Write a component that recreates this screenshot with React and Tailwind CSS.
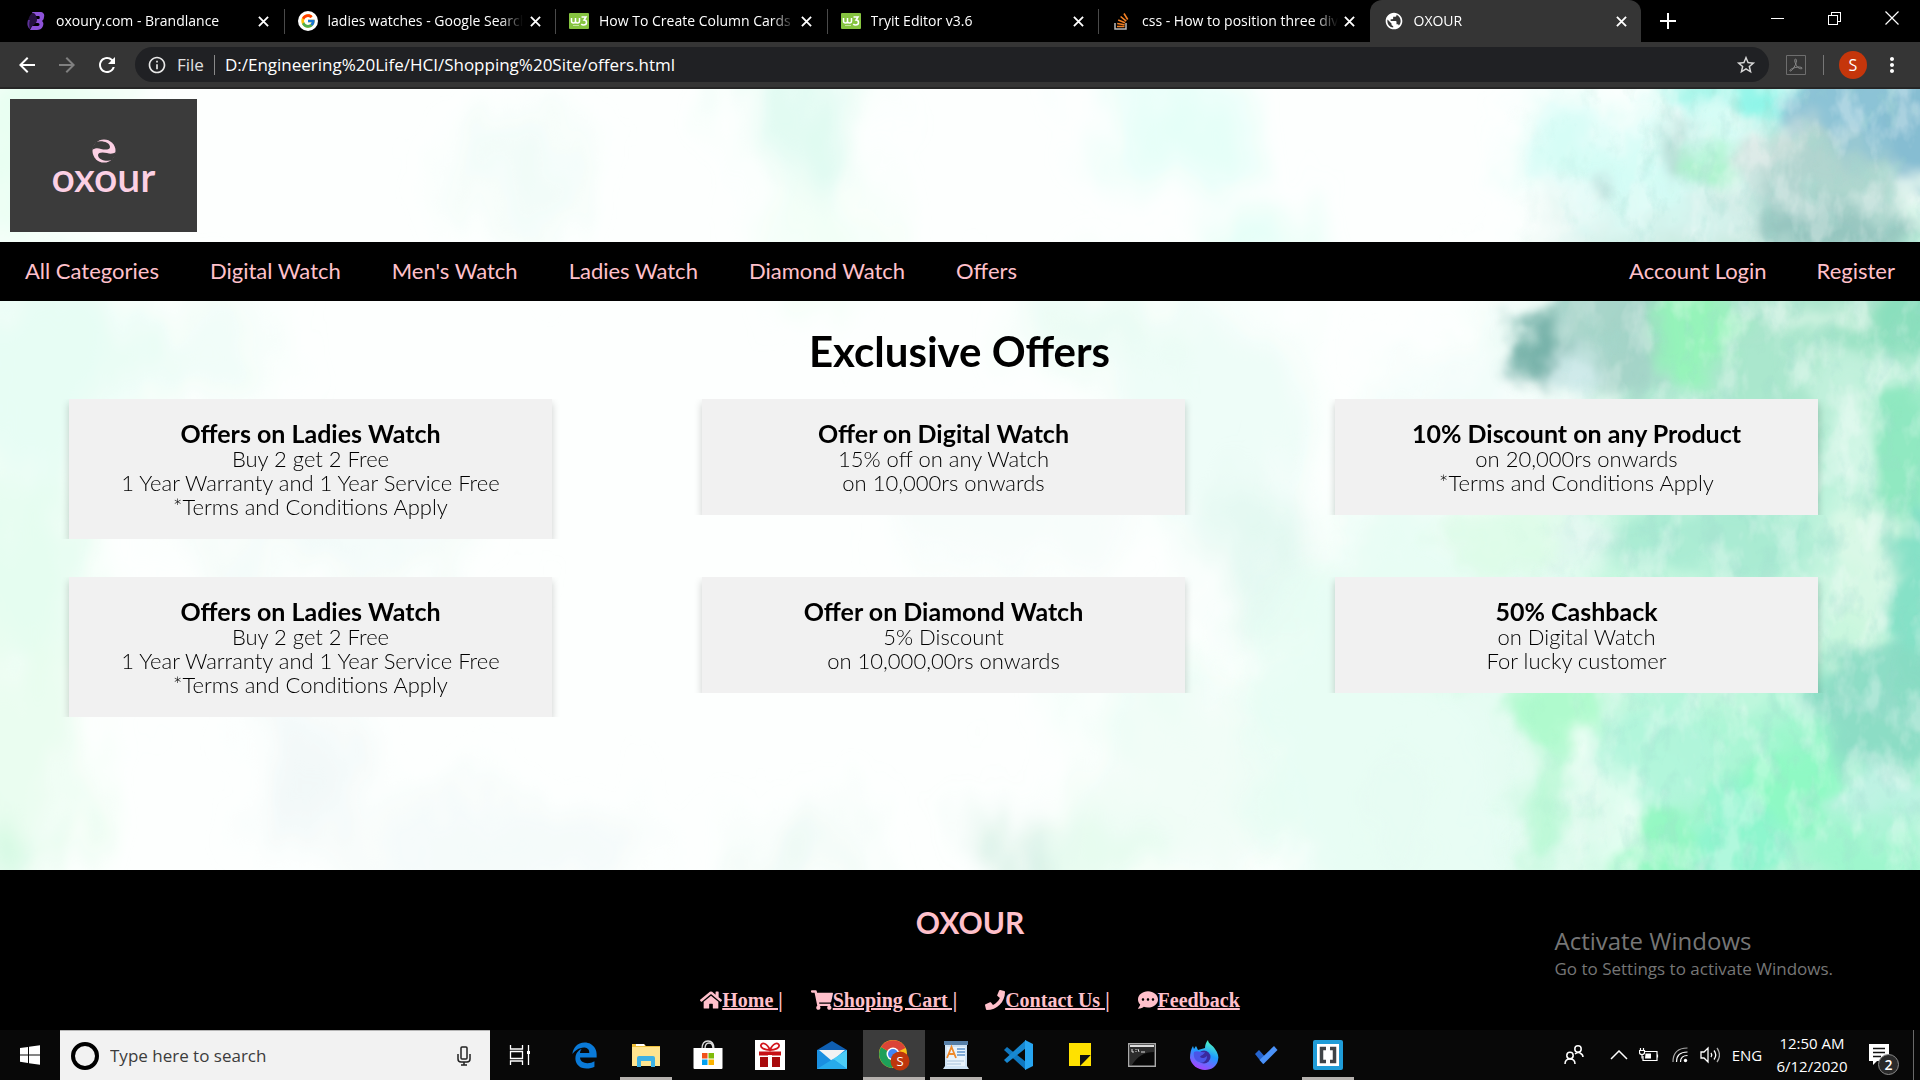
import React from "react";
import { FaHome, FaShoppingCart, FaPhone, FaCommentDots } from "react-icons/fa";
import { FaEdgeLegacy } from "react-icons/fa6";
import { FcGoogle } from "react-icons/fc";
import { MdArrowBack, MdArrowForward, MdRefresh, MdInfoOutline, MdStarBorder, MdMoreVert, MdPublic } from "react-icons/md";

/* ---------- tab icons ---------- */

function BrandlanceIcon() {
  return (
    <svg viewBox="0 0 18 18" className="size-[18px]">
      <path d="M5 0h8c3 0 5 2 4 5 0 2-1 3-2 4 1 1 2 2 1 5-1 3-4 4-6 4H3l2-4h6c2 0 2-3 0-3H8l1-4h3c1 0 1-3 0-3H7z" fill="#8d52d8" />
      <path d="M7 1c-3 0-5 3-6 8 0 4 0 6 2 8 2-4 7-5 7-9 0-3-1-5-3-7z" fill="#25103f" />
      <path d="M1 8c-1 3-1 7 2 9-1-3-1-6 0-9z" fill="#5c3297" />
    </svg>
  );
}

function GoogleIcon() {
  return (
    <span className="flex size-5 items-center justify-center rounded-full bg-white">
      <FcGoogle className="size-4" />
    </span>
  );
}

function W3Icon() {
  return (
    <svg viewBox="0 0 20 16" className="h-4 w-5">
      <rect width="20" height="16" rx="1" fill="#86c440" />
      <path d="M2.500 5v3q0 2 2 2t2-2V5v3q0 2 2 2t2-2V5M12.500 4h4.500l-2 3q2.500 0 2.500 2.500T14.500 12q-1.500 0-2.200-1" fill="none" stroke="#fff" strokeWidth="1.500" />
      <path d="M4 12.500h6" stroke="#c5e59f" strokeWidth="1" />
    </svg>
  );
}

function StackIcon() {
  return (
    <svg viewBox="0 0 16 18" className="h-[18px] w-4" fill="none">
      <path d="M1 11v6h11v-6" stroke="#bcbbbb" strokeWidth="1.500" />
      <path d="M3 14.500h7.500M3.200 11.500l7.400 1.200M4.200 8l6.900 2.700M6.600 4.500l5.600 4.600M10 1.500l3.700 6" stroke="#f48024" strokeWidth="1.600" />
    </svg>
  );
}

function Cross({ className }) {
  return (
    <svg viewBox="0 0 12 12" className={className} fill="none" stroke="currentColor" strokeWidth="2">
      <path d="M1 1l10 10M11 1L1 11" />
    </svg>
  );
}

const tabs = [
  { title: "oxoury.com - Brandlance", icon: <BrandlanceIcon /> },
  { title: "ladies watches - Google Search", icon: <GoogleIcon />, line: true },
  { title: "How To Create Column Cards", icon: <W3Icon />, line: true },
  { title: "Tryit Editor v3.6", icon: <W3Icon />, line: true },
  { title: "css - How to position three divs", icon: <StackIcon />, line: true },
  { title: "OXOUR", icon: <MdPublic className="size-[22px]" />, active: true },
];

function TabStrip() {
  return (
    <div className="flex h-[42px] bg-black text-white">
      <div className="ml-3 flex max-w-[1629px] flex-1">
        {tabs.map((t, i) => (
          <div
            key={i}
            className={
              "flex min-w-0 flex-1 items-center pl-[14px] pr-3 " + (t.active ? "rounded-t-xl bg-[#353535]" : "")
            }
          >
            {t.line && <span className="-ml-[14px] mr-[13px] h-[25px] w-px bg-[#4a4a4a]" />}
            <span className="flex w-5 shrink-0 justify-center">{t.icon}</span>
            <button className="ml-[10px] min-w-0 flex-1 overflow-hidden whitespace-nowrap text-left text-sm leading-5 [mask-image:linear-gradient(to_right,black_88%,transparent)]">
              {t.title}
            </button>
            <button aria-label={"Close " + t.title} className="ml-1 flex size-4 items-center justify-center">
              <Cross className="size-[11px]" />
            </button>
          </div>
        ))}
      </div>
      <button aria-label="New tab" className="flex w-[54px] items-center justify-center">
        <svg viewBox="0 0 16 16" className="size-4" stroke="currentColor" strokeWidth="2">
          <path d="M8 0v16M0 8h16" />
        </svg>
      </button>
      <div className="ml-auto flex h-9">
        <button aria-label="Minimize" className="flex w-[57px] items-center justify-center">
          <span className="h-px w-[13px] bg-white" />
        </button>
        <button aria-label="Restore" className="flex w-[57px] items-center justify-center">
          <svg viewBox="0 0 13 13" className="size-[13px]" fill="none" stroke="currentColor" shapeRendering="crispEdges">
            <path d="M.5 3.500h9v9h-9zM3.500 3V.5h9v9H10" />
          </svg>
        </button>
        <button aria-label="Close window" className="flex w-[57px] items-center justify-center">
          <svg viewBox="0 0 14 14" className="size-[14px]" stroke="currentColor" strokeWidth="1.200">
            <path d="M.5.5l13 13M13.500.5l-13 13" />
          </svg>
        </button>
      </div>
    </div>
  );
}

function Toolbar() {
  return (
    <div className="flex h-[47px] items-center border-b-2 border-[#262626] bg-[#353535] text-white">
      <button aria-label="Back" className="ml-[15px] flex size-6 items-center justify-center">
        <MdArrowBack className="size-6" />
      </button>
      <button aria-label="Forward" className="ml-4 flex size-6 items-center justify-center text-[#808080]">
        <MdArrowForward className="size-6" />
      </button>
      <button aria-label="Reload" className="ml-4 flex size-6 items-center justify-center">
        <MdRefresh className="size-6" />
      </button>
      <div className="ml-4 flex h-[35px] flex-1 items-center rounded-full bg-[#202124]">
        <MdInfoOutline className="ml-3 size-5 text-[#e8e8e8]" />
        <span className="ml-[10px] text-[17px] text-[#e0e0e0]">File</span>
        <span className="mx-[10px] h-5 w-px bg-[#8a8a8a]" />
        <input
          aria-label="Address"
          className="min-w-0 flex-1 bg-transparent text-[17px] leading-6 text-white outline-none"
          defaultValue="D:/Engineering%20Life/HCI/Shopping%20Site/offers.html"
        />
        <button aria-label="Bookmark this page" className="mr-3 text-[#d8d8d8]">
          <MdStarBorder className="size-[22px]" />
        </button>
      </div>
      <button aria-label="PDF tools" className="ml-[17px]">
        <svg viewBox="0 0 20 20" className="size-5" fill="none" stroke="#6e6e6e">
          <path d="M.5.5h19v19H.5z" />
          <path d="M9.500 4c1.500 0 1 3 0 5.500C8 13 5.500 16.500 4 16c-1-1.500 4-3.500 8-4 3 0 4.500.5 4 1.500-1.500 1-5-1-6-4C8.500 7 8.500 4 9.500 4z" stroke="#8a8a8a" />
        </svg>
      </button>
      <span className="ml-[17px] h-5 w-px bg-[#777]" />
      <button className="ml-[15px] flex size-7 items-center justify-center rounded-full bg-[#c5360b] text-base">S</button>
      <button aria-label="Menu" className="ml-[13px] mr-4">
        <MdMoreVert className="size-6" />
      </button>
    </div>
  );
}

/* ---------- page ---------- */

// cx, cy, rx, ry, fill, opacity
const washes = [
  [1800, 450, 210, 430, "#bdf3dc", 1],
  [1640, 620, 150, 220, "#c6f8e0", 0.9],
  [1440, 640, 190, 240, "#e6fdf3", 0.9],
  [1720, 170, 140, 120, "#d4ece7", 1],
  [1640, 70, 120, 60, "#d4fdf6", 1],
  [1650, 220, 80, 50, "#c4ecda", 1],
  [1540, 250, 80, 60, "#effdf8", 1],
  [1450, 330, 90, 50, "#f2fdfa", 1],
  [1760, 260, 160, 90, "#a6e6ca", 0.9],
  [1800, 700, 160, 110, "#a4f5d2", 0.8],
];
const mist = [
  [800, 30, 60, 60, "#dcfbef", 0.9],
  [820, 150, 50, 60, "#effff5", 0.9],
  [1170, 30, 70, 60, "#e2fff7", 0.9],
  [1260, 150, 50, 34, "#dcfff4", 0.9],
  [1100, 235, 90, 40, "#e6fcf2", 0.9],
  [1210, 330, 90, 110, "#ecfdf7", 0.9],
  [1270, 480, 46, 70, "#daf6ec", 0.8],
  [1130, 590, 80, 30, "#e2fcf1", 0.8],
  [1200, 700, 120, 90, "#effdf6", 0.9],
  [60, 10, 80, 40, "#e6ffef", 0.9],
  [10, 80, 40, 80, "#e4fff0", 0.9],
  [50, 280, 100, 100, "#e4fdf3", 0.9],
  [200, 260, 70, 40, "#eafcf5", 0.7],
  [20, 480, 70, 110, "#e2fdee", 0.9],
  [20, 660, 70, 120, "#e8fdee", 0.9],
  [10, 770, 50, 40, "#cff8e0", 0.9],
  [330, 460, 160, 26, "#eefaf6", 0.9],
  [300, 680, 40, 90, "#f0f7f7", 0.9],
  [520, 90, 60, 60, "#eefcf7", 0.9],
  [500, 760, 160, 40, "#f2faf8", 0.9],
  [800, 760, 60, 40, "#eaf8f3", 0.9],
  [1015, 770, 30, 40, "#c6eadb", 0.9],
  [1100, 770, 60, 40, "#dffbea", 0.8],
  [1000, 420, 120, 60, "#f6fdfb", 0.9],
];
const blots = [
  [1765, 8, 32, 26, "#8ff5e8", 1],
  [1700, 4, 40, 16, "#9ef5e8", 0.9],
  [1870, 20, 80, 50, "#8cc3d6", 1],
  [1915, 55, 40, 50, "#86bdd2", 1],
  [1790, 70, 55, 35, "#cfe0dd", 0.9],
  [1710, 74, 24, 14, "#a5f2c6", 1],
  [1830, 110, 70, 60, "#a9d0ca", 0.8],
  [1840, 145, 80, 22, "#8fc1ba", 0.8],
  [1910, 100, 26, 18, "#e3f5ee", 0.9],
  [1680, 60, 14, 26, "#b0d4ce", 0.8],
  [1605, 100, 12, 14, "#bdd8d6", 0.8],
  [1620, 245, 70, 60, "#a3d2c6", 0.9],
  [1540, 262, 26, 34, "#78b3aa", 1],
  [1575, 285, 22, 26, "#cfeaea", 1],
  [1695, 240, 40, 60, "#93f5b8", 0.9],
  [1890, 220, 60, 40, "#80dbb6", 0.8],
  [1820, 225, 60, 12, "#e0f8ea", 0.7],
  [1860, 290, 60, 25, "#c6f3df", 0.8],
  [1900, 370, 45, 80, "#84e6ba", 0.8],
  [1850, 350, 20, 50, "#d8f8ea", 0.8],
  [1700, 450, 110, 40, "#a4e9cf", 0.8],
  [1590, 450, 40, 30, "#def6ee", 0.9],
  [1500, 450, 60, 30, "#dbfbe6", 0.8],
  [1860, 470, 36, 60, "#dbf8e8", 0.9],
  [1845, 560, 26, 70, "#cbf7de", 0.9],
  [1915, 520, 26, 100, "#7fdfc4", 0.9],
  [1875, 620, 70, 60, "#88dac3", 0.9],
  [1560, 620, 44, 50, "#a8fac9", 0.9],
  [1545, 720, 30, 60, "#b4f7d2", 0.8],
  [1578, 655, 14, 26, "#f0fff7", 0.9],
  [1660, 660, 60, 60, "#b0f5da", 0.9],
  [1620, 730, 16, 60, "#e6fff2", 0.8],
  [1790, 700, 50, 50, "#8cfac2", 0.9],
  [1740, 750, 46, 50, "#8cf5cd", 0.9],
  [1660, 770, 36, 50, "#90f7c0", 0.9],
  [1870, 770, 60, 30, "#9cf6cc", 0.9],
  [1885, 705, 40, 30, "#c0f2e4", 0.9],
  [1450, 560, 60, 40, "#d4fbe5", 0.8],
  [1400, 720, 30, 60, "#e6fbf3", 0.8],
];

function Blobs({ items }) {
  return items.map(([cx, cy, rx, ry, fill, o], i) => (
    <ellipse key={i} cx={cx} cy={cy} rx={rx} ry={ry} fill={fill} opacity={o} />
  ));
}

function Watercolour() {
  return (
    <svg
      aria-hidden="true"
      viewBox="0 0 1920 781"
      preserveAspectRatio="none"
      className="absolute inset-0 size-full"
    >
      <defs>
        <filter id="wash" x="-10%" y="-10%" width="120%" height="120%">
          <feGaussianBlur stdDeviation="26" result="b" />
          <feTurbulence type="fractalNoise" baseFrequency="0.012" numOctaves="4" seed="4" />
          <feDisplacementMap in="b" scale="110" xChannelSelector="R" yChannelSelector="G" />
        </filter>
        <filter id="mist" x="-10%" y="-10%" width="120%" height="120%">
          <feGaussianBlur stdDeviation="24" result="b" />
          <feTurbulence type="fractalNoise" baseFrequency="0.015 0.008" numOctaves="4" seed="14" />
          <feDisplacementMap in="b" scale="120" xChannelSelector="R" yChannelSelector="G" result="d" />
          <feGaussianBlur in="d" stdDeviation="4" />
        </filter>
        <filter id="blot" x="-10%" y="-10%" width="120%" height="120%">
          <feGaussianBlur stdDeviation="9" result="b" />
          <feTurbulence type="fractalNoise" baseFrequency="0.02" numOctaves="5" seed="9" />
          <feDisplacementMap in="b" scale="60" xChannelSelector="R" yChannelSelector="G" result="d" />
          <feGaussianBlur in="d" stdDeviation="2" />
        </filter>
        <filter id="grain" x="0" y="0" width="100%" height="100%">
          <feTurbulence type="fractalNoise" baseFrequency="0.035 0.02" numOctaves="4" seed="2" />
          <feColorMatrix values="0 0 0 0 1  0 0 0 0 1  0 0 0 0 1  4 0 0 0 -1.900" />
        </filter>
        <filter id="shade" x="0" y="0" width="100%" height="100%">
          <feTurbulence type="fractalNoise" baseFrequency="0.05 0.03" numOctaves="4" seed="21" />
          <feColorMatrix values="0 0 0 0 .35  0 0 0 0 .7  0 0 0 0 .62  0 4 0 0 -2.100" />
        </filter>
        <linearGradient id="fade" x1="0" x2="1">
          <stop offset="0" stopColor="#000" />
          <stop offset="0.400" stopColor="#fff" />
        </linearGradient>
        <mask id="right">
          <rect x="1500" width="420" height="781" fill="url(#fade)" />
        </mask>
      </defs>
      <rect width="1920" height="781" fill="#fdfffe" />
      <g filter="url(#mist)"><Blobs items={mist} /></g>
      <g filter="url(#wash)"><Blobs items={washes} /></g>
      <g filter="url(#blot)"><Blobs items={blots} /></g>
      <g mask="url(#right)">
        <rect x="1500" width="420" height="781" filter="url(#grain)" opacity="0.300" />
        <rect x="1500" width="420" height="781" filter="url(#shade)" opacity="0.280" />
      </g>
    </svg>
  );
}

function Logo() {
  return (
    <div className="flex h-[133px] w-[187px] flex-col items-center bg-[#3b3b3b] pt-10 text-[#fcd0e4]">
      <svg viewBox="0 0 24 24" className="size-6">
        <circle cx="12" cy="12" r="11.500" fill="currentColor" />
        <g fill="#3b3b3b">
          <path d="M1 7L4 3C9 1 18 3 18 8c0 3-5 3-9 2C6 9 3 9 0 11z" />
          <path d="M23 17l-3 4c-5 2-14 0-14-5 0-3 5-3 9-2 3 1 6 1 9-1z" />
        </g>
      </svg>
      <span className="-mt-2 text-[41px] font-semibold leading-[44px]">oxour</span>
    </div>
  );
}

const leftLinks = ["All Categories", "Digital Watch", "Men's Watch", "Ladies Watch", "Diamond Watch", "Offers"];
const rightLinks = ["Account Login", "Register"];

function NavBar() {
  return (
    <nav className="relative flex h-[59px] items-center justify-between bg-black pb-[2px] text-[22px] leading-7 text-[#ffc0cb]">
      <div className="flex gap-px">
        {leftLinks.map((l) => (
          <a key={l} href="#" className="px-[25px]">{l}</a>
        ))}
      </div>
      <div className="flex">
        {rightLinks.map((l) => (
          <a key={l} href="#" className="px-[25px]">{l}</a>
        ))}
      </div>
    </nav>
  );
}

const offers = [
  { title: "Offers on Ladies Watch", lines: ["Buy 2 get 2 Free", "1 Year Warranty and 1 Year Service Free", "*Terms and Conditions Apply"] },
  { title: "Offer on Digital Watch", lines: ["15% off on any Watch", "on 10,000rs onwards"] },
  { title: "10% Discount on any Product", lines: ["on 20,000rs onwards", "*Terms and Conditions Apply"] },
  { title: "Offers on Ladies Watch", lines: ["Buy 2 get 2 Free", "1 Year Warranty and 1 Year Service Free", "*Terms and Conditions Apply"] },
  { title: "Offer on Diamond Watch", lines: ["5% Discount", "on 10,000,00rs onwards"] },
  { title: "50% Cashback", lines: ["on Digital Watch", "For lucky customer"] },
];

function OfferCard({ title, lines }) {
  return (
    <article className="bg-[#f1f1f1] py-5 text-center text-[22px] font-light leading-6 text-black shadow-[0_4px_8px_rgba(0,0,0,0.2)] [clip-path:inset(0_-12px)]">
      <h2 className="text-[25px] font-bold leading-7">{title}</h2>
      {lines.map((l) => (
        <p key={l}>{l}</p>
      ))}
    </article>
  );
}

const footLinks = [
  { label: "Home |", Icon: FaHome, size: "w-[22px]" },
  { label: "Shoping Cart |", Icon: FaShoppingCart, size: "w-[22px]" },
  { label: "Contact Us |", Icon: FaPhone, size: "w-5" },
  { label: "Feedback", Icon: FaCommentDots, size: "w-5" },
];

function Footer() {
  return (
    <footer className="relative flex h-40 flex-col items-center bg-black pl-5 text-[#ffc0cb]">
      <h2 className="mt-[30px] text-3xl font-bold leading-[44px]">OXOUR</h2>
      <div className="mt-[42px] flex gap-7 font-['Liberation_Serif',serif] text-xl font-bold leading-7">
        {footLinks.map(({ label, Icon, size }) => (
          <a key={label} href="#" className="flex items-center underline">
            <Icon className={"h-5 " + size} />
            {label}
          </a>
        ))}
      </div>
    </footer>
  );
}

function Page() {
  return (
    <div className="relative flex min-h-0 flex-1 flex-col overflow-hidden font-[Lato,sans-serif]">
      <div className="relative flex min-h-0 flex-1 flex-col">
        <Watercolour />
        <header className="relative px-[10px] py-[10px]">
          <Logo />
        </header>
        <NavBar />
        <main className="relative flex-1 pl-[69px] pr-[102px]">
          <h1 className="ml-8 pb-5 pt-[22px] text-center text-[42px] font-bold leading-[56px] text-black">Exclusive Offers</h1>
          <div className="grid grid-cols-3 items-start gap-x-[150px] gap-y-[38px]">
            {offers.map((o, i) => (
              <OfferCard key={i} {...o} />
            ))}
          </div>
        </main>
      </div>
      <Footer />
      <div className="absolute bottom-[49px] right-[87px] font-['Open_Sans',sans-serif] text-[#767676]">
        <div className="text-2xl leading-8">Activate Windows</div>
        <div className="text-[17px] leading-6">Go to Settings to activate Windows.</div>
      </div>
    </div>
  );
}

/* ---------- taskbar ---------- */

const apps = [
  { name: "Edge", icon: <FaEdgeLegacy className="size-[27px] text-[#0a7ad8]" /> },
  {
    name: "File Explorer",
    open: true,
    icon: (
      <svg viewBox="0 0 28 24" className="h-6 w-7">
        <path d="M0 1h12l2 2h14v20H0z" fill="#f0c13c" />
        <path d="M0 4h28v19H0z" fill="#ffe48f" />
        <path d="M4 1h8l1 2H4z" fill="#fff" />
        <path d="M5 24V15q0-2 2-2h14q2 0 2 2v9h-4v-6H9v6z" fill="#3eb1e4" />
      </svg>
    ),
  },
  {
    name: "Store",
    icon: (
      <svg viewBox="0 0 30 30" className="size-[30px]">
        <path d="M9 9C9 3 12 1 15 1s6 2 6 8M12 9c0-4 2-6 4-6s4 2 4 6" fill="none" stroke="#ddd" strokeWidth="1.300" />
        <path d="M.5 8h29v20q0 1-1 1h-27q-1 0-1-1z" fill="#fff" />
        <path d="M9 13h5.500v5.500H9z" fill="#f1511b" /><path d="M15.500 13H21v5.500h-5.500z" fill="#80bb0a" />
        <path d="M9 19.500h5.500V25H9z" fill="#00a1f1" /><path d="M15.500 19.500H21V25h-5.500z" fill="#fbb300" />
      </svg>
    ),
  },
  {
    name: "Gifts",
    icon: (
      <svg viewBox="0 0 30 30" className="size-[30px]">
        <path d="M0 0h30v30H0z" fill="#fff" />
        <path d="M15 10C12 3 7 2 6 5s4 5 9 5c5 0 10-2 9-5s-6-2-9 5z" fill="none" stroke="#d3151b" strokeWidth="1.800" />
        <path d="M4 11.500h9v4H4zM17 11.500h9v4h-9z" fill="#c81015" />
        <path d="M5 17h8v10H5zM17 17h8v10h-8z" fill="#a80a0c" />
        <path d="M13 11.500h4v3.500h-4z" fill="#c81015" />
      </svg>
    ),
  },
  {
    name: "Mail",
    icon: (
      <svg viewBox="0 0 30 28" className="h-7 w-[30px]">
        <path d="M0 9L15 0l15 9z" fill="#0f5fb2" />
        <path d="M0 9h30v19H0z" fill="#1a8fe0" />
        <path d="M2 9h26L15 20z" fill="#f3f3f3" />
        <path d="M30 9v19L16 18z" fill="#4ccdf7" /><path d="M0 28l16-10 14 10z" fill="#27abec" />
      </svg>
    ),
  },
  {
    name: "Chrome",
    open: true,
    current: true,
    icon: (
      <svg viewBox="0 0 32 32" className="size-8">
        <circle cx="15" cy="15" r="14" fill="#fbc116" />
        <path d="M15 15L3 8A14 14 0 0 0 14 29l6-10z" fill="#1da05a" />
        <path d="M15 15L3 8A14 14 0 0 1 27.500 9z" fill="#db4437" />
        <circle cx="15" cy="15" r="6.500" fill="#fff" /><circle cx="15" cy="15" r="5" fill="#4285f4" />
        <circle cx="22" cy="22" r="9.500" fill="#bf360c" />
        <text x="22" y="27" textAnchor="middle" fontSize="13" fill="#fff">S</text>
      </svg>
    ),
  },
  {
    name: "WordPad",
    open: true,
    icon: (
      <svg viewBox="0 0 28 30" className="h-[30px] w-7">
        <path d="M3 2h22v24l2 3H1l2-3z" fill="#cfe3f5" />
        <path d="M2 1h24v4H2z" fill="#567fa8" />
        <path d="M5 7h18v19H5z" fill="#e9f3fc" />
        <path d="M5 18L9.500 7 14 18M7 14h5" fill="none" stroke="#ef8a2c" strokeWidth="1.800" />
        <path d="M15 9h8M15 12h8M15 15h8" stroke="#5e92c9" strokeWidth="1.500" />
        <path d="M5 21h17M5 24h14" stroke="#a9c3dc" strokeWidth="1.200" />
      </svg>
    ),
  },
  {
    name: "Visual Studio Code",
    icon: (
      <svg viewBox="0 0 30 30" className="size-[30px]">
        <path d="M1 10l3-3 19 15v8z" fill="#0f78c0" />
        <path d="M1 20l3 3L23 8V0z" fill="#1788d1" />
        <path d="M22 0l8 4v22l-8 4z" fill="#27a5f1" />
      </svg>
    ),
  },
  {
    name: "Sticky Notes",
    icon: (
      <svg viewBox="0 0 24 24" className="size-6">
        <path d="M1 0h22v23H1z" fill="#ffe100" /><path d="M12 23V12h11z" fill="#111" /><path d="M13 23l10-11v11z" fill="#ffe100" />
      </svg>
    ),
  },
  {
    name: "Command Prompt",
    icon: (
      <svg viewBox="0 0 28 24" className="h-6 w-7">
        <path d="M.7.700h26.600v22.600H.7z" fill="#070707" stroke="#a9a9a9" strokeWidth="1.400" />
        <path d="M2 2h24v2H2z" fill="#dcdcdc" /><path d="M2 4h24v5Q12 9 4 22H2z" fill="#2c2c2c" />
        <path d="M4 6v3h2M8 6v1M8 8v1M10 6l1 3M13 9h4" fill="none" stroke="#ddd" />
      </svg>
    ),
  },
  {
    name: "Firefox Developer Edition",
    icon: (
      <svg viewBox="0 0 30 30" className="size-[30px]">
        <defs>
          <linearGradient id="ff" x1="0.700" y1="0" x2="0.300" y2="1">
            <stop offset="0" stopColor="#54ffbd" /><stop offset="0.450" stopColor="#1e9bff" /><stop offset="1" stopColor="#b13cff" />
          </linearGradient>
        </defs>
        <path d="M19 0c0 4 5 5 7 9 3 4 4 8 3 11-1 6-6 10-13 10S2 25 1 18C1 13 2 9 4 6l1 3 2-3 2 4c2-1 5-1 7-2 0-3 1-6 3-8z" fill="url(#ff)" />
        <circle cx="15" cy="17" r="6.500" fill="#3a2a9e" />
        <path d="M5 12c4-2 7 1 11 0-1 3-4 3-5 5 2 2 5 1 7-1 0 5-4 8-8 6-4-1-6-6-5-10z" fill="#4a55e8" />
      </svg>
    ),
  },
  {
    name: "To Do",
    icon: (
      <svg viewBox="0 0 24 20" className="h-5 w-6">
        <path d="M1 9l4-4 8 9-4 5z" fill="#2564cf" /><path d="M20 1l3.500 4L9.500 19l-4-4z" fill="#4b92f8" />
      </svg>
    ),
  },
  {
    name: "Brackets",
    open: true,
    icon: (
      <svg viewBox="0 0 30 30" className="size-[30px]">
        <rect width="30" height="30" rx="2" fill="#1f9cd8" /><rect x="4" y="4" width="22" height="22" fill="#fff" />
        <path d="M13 8.500H8.500v13H13M17 8.500h4.500v13H17" fill="none" stroke="#3f4347" strokeWidth="3.500" />
      </svg>
    ),
  },
];

function Taskbar() {
  return (
    <div className="flex h-[50px] bg-[#080808] text-white">
      <button aria-label="Start" className="flex w-[60px] items-center justify-center">
        <svg viewBox="0 0 20 20" className="size-5" fill="#fff">
          <path d="M0 3l8-1v7.500H0zM9 1.800L20 .2v9.300H9zM0 10.500h8V18l-8-1.200zM9 10.500h11v9.300L9 18.200z" />
        </svg>
      </button>
      <label className="flex w-[430px] items-center border-t border-[#b5b5b5] bg-[#f2f2f2]">
        <span className="ml-[11px] size-7 rounded-full border-4 border-black" />
        <input
          aria-label="Search"
          placeholder="Type here to search"
          className="ml-[11px] min-w-0 flex-1 bg-transparent text-[17px] text-black placeholder-[#3c3c3c] outline-none"
        />
        <svg viewBox="0 0 14 20" className="mr-[19px] h-5 w-[14px]" fill="none" stroke="#222" strokeWidth="1.500">
          <rect x="4" y="1" width="6" height="12" rx="1" />
          <path d="M1 8v5q0 3 3 3h6q3 0 3-3V8M7 16v3M4 19h6" />
        </svg>
      </label>
      <button aria-label="Task View" className="flex w-[63px] items-center justify-center pr-1">
        <svg viewBox="0 0 22 20" className="h-5 w-[22px]" fill="none" stroke="#fff" strokeWidth="1.300">
          <path d="M1.500 0v4h12V0M1.500 20v-4h12v4M1.500 6.500h12v7h-12zM19.500 0v20" />
          <path d="M18 6h3v3h-3z" fill="#fff" stroke="none" />
        </svg>
      </button>
      {apps.map((a) => (
        <button
          key={a.name}
          aria-label={a.name}
          className={"relative flex w-[62px] items-center justify-center " + (a.current ? "bg-[#3c3c3c]" : "")}
        >
          {a.icon}
          {a.open && (
            <span className={"absolute bottom-0 h-[3px] bg-[#b5b1ae] " + (a.current ? "inset-x-0" : "inset-x-[5px]")} />
          )}
        </button>
      ))}
      <div className="ml-auto flex items-center">
        <button aria-label="People" className="mr-[10px] flex w-10 justify-center">
          <svg viewBox="0 0 20 20" className="size-5" fill="none" stroke="#fff" strokeWidth="1.500">
            <circle cx="14" cy="4" r="3.200" /><circle cx="6" cy="10.500" r="3.200" />
            <path d="M1 19q0-5 5-5t5 5M11 9q3-2.500 5-1 3 1.500 3 4" />
          </svg>
        </button>
        <button aria-label="Show hidden icons" className="flex w-[30px] justify-center">
          <svg viewBox="0 0 18 10" className="h-[10px] w-[18px]" fill="none" stroke="#fff" strokeWidth="1.500"><path d="M1 9l8-8 8 8" /></svg>
        </button>
        <button aria-label="Battery" className="flex w-[30px] justify-center">
          <svg viewBox="0 0 20 14" className="h-[14px] w-5" fill="none" stroke="#fff" strokeWidth="1.200">
            <path d="M5 3.500h13v9H4V8M18.500 6.500v3" /><path d="M6.500 5.500H12v5H6z" fill="#fff" stroke="none" />
            <path d="M1.500 0v2M4.500 0v2M.5 2.500h5v2q0 2-2.500 2t-2.500-2zM3 6.500v4" />
          </svg>
        </button>
        <button aria-label="Network" className="flex w-8 justify-center">
          <svg viewBox="0 0 16 16" className="size-4" fill="none" stroke="#fff" strokeWidth="1.200">
            <path d="M1 15Q1 1 15.500 1" stroke="#aaa" /><path d="M4.500 15q0-10 11-10M8.500 15q0-6.500 7-6.500" />
            <circle cx="13.500" cy="13.500" r="1.700" fill="#fff" stroke="none" />
          </svg>
        </button>
        <button aria-label="Volume" className="flex w-7 justify-center">
          <svg viewBox="0 0 20 18" className="h-[18px] w-5" fill="none" stroke="#fff" strokeWidth="1.300">
            <path d="M1 6h3l4-4v14l-4-4H1zM11 7q1.500 2 0 4M14 4.500q3.500 4.500 0 9" /><path d="M17 2q5 7 0 14" stroke="#aaa" />
          </svg>
        </button>
        <button className="w-[46px] text-center text-[15px]">ENG</button>
        <button className="w-[84px] text-center text-[15px] leading-[23px]">
          12:50 AM
          <br />
          6/12/2020
        </button>
        <button aria-label="2 notifications" className="relative ml-[15px] mr-6 h-[22px] w-5">
          <svg viewBox="0 0 20 22" className="h-[22px] w-5">
            <path d="M0 0h20v17H8l-4 4v-4H0z" fill="#fff" /><path d="M4 4.500h12M4 8.500h12M4 12.500h8" stroke="#111" strokeWidth="1.300" />
          </svg>
          <span className="absolute -bottom-[9px] -right-[10px] flex size-[21px] items-center justify-center rounded-full border border-[#8a8a8a] bg-[#2a2a2a] text-sm font-semibold">
            2
          </span>
        </button>
        <button aria-label="Show desktop" className="h-[50px] w-[7px] border-l border-[#6a6a6a]" />
      </div>
    </div>
  );
}

export default function App() {
  return (
    <div className="flex h-screen flex-col bg-black font-['Open_Sans',sans-serif]">
      <TabStrip />
      <Toolbar />
      <Page />
      <Taskbar />
    </div>
  );
}
